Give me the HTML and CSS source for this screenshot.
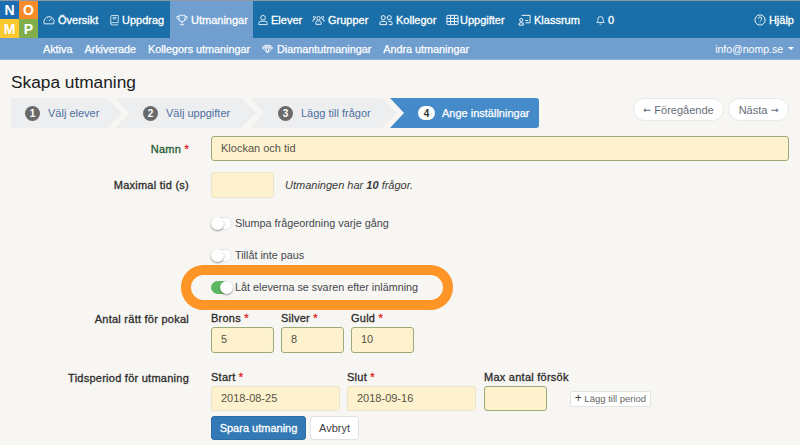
FILE: index.html
```html
<!DOCTYPE html>
<html lang="sv">
<head>
<meta charset="utf-8">
<title>Skapa utmaning</title>
<link rel="stylesheet" href="styles.css">
</head>
<body>
<header class="header">
  <div class="logo">
    <span class="logo-cell logo-n">N</span><span class="logo-cell logo-o">O</span>
    <span class="logo-cell logo-m">M</span><span class="logo-cell logo-p">P</span>
  </div>
  <nav class="topnav">
    <a class="topitem"><svg class="ico" viewBox="0 0 14 12"><path d="M1.500 10.500a6 6 0 1 1 11 0z"/><path d="M7 7l3-3M3.500 6.500h.5M10 7h.5M5 4h.5"/></svg>Översikt</a>
    <a class="topitem"><svg class="ico ico-9" viewBox="0 0 12 14"><path d="M1 11.500V2.500A1.500 1.500 0 0 1 2.500 1H11v9.500H2.500a1.500 1.500 0 0 0 0 3H11"/><path d="M3.500 3.500H8.500M3.500 5.500H8.500"/></svg>Uppdrag</a>
    <a class="topitem active"><svg class="ico" viewBox="0 0 14 13"><path d="M3.500 1h7v4a3.500 3.500 0 0 1-7 0zM3.500 2.500H1c0 2.500 1 3.500 3 4M10.500 2.500H13c0 2.500-1 3.500-3 4M7 8.500V11M4.500 12h5"/></svg>Utmaningar</a>
    <a class="topitem top-elever"><svg class="ico ico-10" viewBox="0 0 12 13"><circle cx="6" cy="3.800" r="2.800"/><path d="M1 12V10.500a2.500 2.500 0 0 1 2.500-2.500h5a2.500 2.500 0 0 1 2.500 2.500V12z"/></svg>Elever</a>
    <a class="topitem"><svg class="ico ico-13" viewBox="0 0 15 12"><circle cx="7.500" cy="4" r="2"/><circle cx="2.800" cy="3" r="1.300"/><circle cx="12.200" cy="3" r="1.300"/><path d="M4.500 11V9a2 2 0 0 1 2-2h2a2 2 0 0 1 2 2v2zM1 8V7a1.500 1.500 0 0 1 1.500-1.500h1M14 8V7a1.500 1.500 0 0 0-1.500-1.500h-1"/></svg>Grupper</a>
    <a class="topitem"><svg class="ico ico-14" viewBox="0 0 15 12"><circle cx="4.500" cy="3.500" r="2.200"/><circle cx="11" cy="3.500" r="2.200"/><path d="M1 11V9a1.500 1.500 0 0 1 1.500-1.500h4A1.500 1.500 0 0 1 8 9v2zM10 7.500h2.500A1.500 1.500 0 0 1 14 9v2h-3.500"/></svg>Kollegor</a>
    <a class="topitem top-tasks"><svg class="ico ico-13" viewBox="0 0 14 12"><rect x="1" y="1" width="12" height="10" rx="1"/><path d="M1 4.300h12M1 7.600h12M5 1v10M9 1v10"/></svg>Uppgifter</a>
    <a class="topitem"><svg class="ico ico-13" viewBox="0 0 14 12"><circle cx="3.500" cy="6" r="1.700"/><path d="M1 11.500V10.500A1.500 1.500 0 0 1 2.500 9h2A1.500 1.500 0 0 1 6 10.500v1zM4 1h9v8H8M8 6.500h3"/></svg>Klassrum</a>
    <a class="topitem bell"><svg class="ico ico-9" viewBox="0 0 11 13"><path d="M1 9.500c1-1 1.300-2 1.300-4a3.200 3.200 0 0 1 6.400 0c0 2 .3 3 1.300 4zM4.300 11.500h2.400"/></svg>0</a>
    <a class="topitem help"><svg class="ico" viewBox="0 0 13 13"><circle cx="6.500" cy="6.500" r="5.500"/><path d="M4.800 5a1.800 1.800 0 1 1 2.600 1.600c-.6.300-.9.700-.9 1.300M6.500 9.300v.7"/></svg>Hjälp</a>
  </nav>
</header>
<div class="subbar">
  <a class="subitem">Aktiva</a>
  <a class="subitem">Arkiverade</a>
  <a class="subitem">Kollegors utmaningar</a>
  <a class="subitem subitem-icon"><svg class="ico ico-gem" viewBox="0 0 12 10"><path d="M3 1h6l2.500 2.800L6 9.300.5 3.800zM.5 3.800h11M4 3.800L6 9.300l2-5.500M3 1l1 2.800L6 1l2 2.800L9 1"/></svg>Diamantutmaningar</a>
  <a class="subitem">Andra utmaningar</a>
  <a class="subitem account">info@nomp.se<span class="caret"></span></a>
</div>
<main class="page">
  <h1 class="title">Skapa utmaning</h1>
  <div class="wizard">
    <ol class="steps">
      <li class="step step-1"><span class="num">1</span>Välj elever</li>
      <li class="step step-2"><span class="num">2</span>Välj uppgifter</li>
      <li class="step step-3"><span class="num">3</span>Lägg till frågor</li>
      <li class="step step-4"><span class="num">4</span>Ange inställningar</li>
    </ol>
    <div class="pager">
      <a class="pill pill-prev"><span class="arrow">←</span>Föregående</a>
      <a class="pill pill-next">Nästa<span class="arrow">→</span></a>
    </div>
  </div>
  <form class="form">
    <div class="row row-name">
      <label class="lbl lbl-name">Namn <i class="req">*</i></label>
      <div class="field field-full"><span class="input strong full">Klockan och tid</span></div>
    </div>
    <div class="row row-time">
      <label class="lbl">Maximal tid (s)</label>
      <div class="field inline">
        <span class="input small"></span>
        <span class="hint">Utmaningen har <b>10</b> frågor.</span>
      </div>
    </div>
    <div class="row row-toggle">
      <div class="toggle-line"><span class="toggle"></span>Slumpa frågeordning varje gång</div>
    </div>
    <div class="row row-toggle">
      <div class="toggle-line"><span class="toggle"></span>Tillåt inte paus</div>
    </div>
    <div class="row row-toggle">
      <div class="toggle-line highlighted"><span class="toggle on"></span>Låt eleverna se svaren efter inlämning<span class="ring"></span></div>
    </div>
    <div class="row row-trophy">
      <label class="lbl lbl-top">Antal rätt för pokal</label>
      <div class="cols">
        <div class="col"><span class="sub">Brons <i class="req">*</i></span><span class="input strong small">5</span></div>
        <div class="col"><span class="sub">Silver <i class="req">*</i></span><span class="input strong small">8</span></div>
        <div class="col"><span class="sub">Guld <i class="req">*</i></span><span class="input strong small">10</span></div>
      </div>
    </div>
    <div class="row row-period">
      <label class="lbl lbl-top">Tidsperiod för utmaning</label>
      <div class="cols">
        <div class="col"><span class="sub">Start <i class="req">*</i></span><span class="input date">2018-08-25</span></div>
        <div class="col"><span class="sub">Slut <i class="req">*</i></span><span class="input date">2018-09-16</span></div>
        <div class="col col-max"><span class="sub">Max antal försök</span><span class="input strong small"></span></div>
        <a class="add"><span class="plus">+</span> Lägg till period</a>
      </div>
    </div>
    <div class="row row-actions">
      <div class="actions">
        <a class="btn primary">Spara utmaning</a>
        <a class="btn plain">Avbryt</a>
      </div>
    </div>
  </form>
</main>
</body>
</html>
```
FILE: styles.css
```css
* { box-sizing: border-box; }
html, body { margin: 0; padding: 0; }
body {
  width: 800px;
  height: 445px;
  overflow: hidden;
  background: #f7f6f2;
  color: #2b2b2b;
  font-family: "Liberation Sans", Arial, sans-serif;
  font-size: 11px;
}
a { text-decoration: none; color: inherit; }
.header {
  display: flex;
  height: 38px;
  border-top: 1px solid #8c9aa6;
  background: #1b6fa8;
}
.logo {
  display: grid;
  grid-template-columns: 19px 19px;
  grid-template-rows: 18px 19px;
  flex: none;
  width: 38px;
  margin-right: -1px;
  position: relative;
}
.logo-cell {
  display: flex;
  align-items: center;
  justify-content: center;
  color: #fff;
  font-weight: 700;
  font-size: 14px;
}
.logo-n { background: #1b6cb3; }
.logo-o { background: #f68b2c; }
.logo-m { background: #fdc92f; }
.logo-p { background: #7fae4b; }
.topnav {
  display: grid;
  flex: 1;
  grid-template-columns: 67px 66px 83px 53px 67px 67px 72px 72px auto 1fr;
}
.topitem {
  display: flex;
  align-items: center;
  gap: 3px;
  padding: 0 6px;
  color: #fff;
  font-size: 11px;
  white-space: nowrap;
  -webkit-text-stroke: .3px #fff;
}
.topitem.active { background: #6f9ecf; }
.ico {
  flex: none;
  width: 12px;
  height: 12px;
  fill: none;
  stroke: #fff;
  stroke-width: 1;
}
.ico-9 { width: 9px; }
.ico-10 { width: 10px; }
.ico-13 { width: 13px; }
.ico-14 { width: 14px; }
.top-elever { padding-left: 5px; }
.top-tasks .ico { margin-right: -2px; }
.bell { margin-left: 6px; }
.help { justify-self: end; }
.subbar {
  display: flex;
  align-items: center;
  height: 22px;
  padding-left: 37px;
  background: #6f9ecf;
  border-bottom: 1px solid #8fb2d8;
}
.subitem {
  display: flex;
  align-items: center;
  gap: 4px;
  padding: 0 6px;
  color: #fff;
  font-size: 10.800px;
  -webkit-text-stroke: .25px #fff;
}
.ico-gem { width: 11px; height: 10px; }
.account { margin-left: auto; -webkit-text-stroke: 0; font-size: 10.500px; }
.caret {
  width: 0;
  height: 0;
  margin-left: 1px;
  border-left: 3px solid transparent;
  border-right: 3px solid transparent;
  border-top: 3px solid #fff;
}
.page { padding: 0 11px; }
.title {
  margin: 0;
  height: 38px;
  padding-top: 12px;
  color: #1c1c1c;
  font-size: 17.300px;
  font-weight: 400;
  line-height: 21px;
}
.wizard { display: flex; justify-content: space-between; align-items: flex-start; }
.steps { display: flex; margin: 0; padding: 0; list-style: none; }
.step {
  display: flex;
  align-items: center;
  height: 30px;
  margin-left: -7px;
  background: #edeef0;
  color: #4f6f9f;
  font-size: 11px;
  clip-path: polygon(0 0, calc(100% - 15px) 0, 100% 50%, calc(100% - 15px) 100%, 0 100%, 14px 50%);
}
.step-1 {
  width: 111px;
  margin-left: 0;
  padding-left: 14px;
  border-radius: 3px 0 0 3px;
  clip-path: polygon(0 0, calc(100% - 15px) 0, 100% 50%, calc(100% - 15px) 100%, 0 100%);
}
.step-2 { width: 141px; padding-left: 28px; }
.step-3 { width: 147px; margin-left: -6px; padding-left: 28px; }
.step-4 {
  width: 149px;
  padding-left: 28px;
  background: #458ac9;
  color: #fff;
  -webkit-text-stroke: .25px #fff;
  border-radius: 0 3px 3px 0;
  clip-path: polygon(0 0, 100% 0, 100% 100%, 0 100%, 14px 50%);
}
.num {
  display: flex;
  align-items: center;
  justify-content: center;
  width: 15px;
  height: 15px;
  margin-right: 8px;
  border-radius: 8px;
  background: #6a6a6a;
  color: #fff;
  font-size: 10px;
  font-weight: 700;
  -webkit-text-stroke: 0;
}
.step-4 .num { width: 17px; height: 14px; margin-right: 7px; background: #fff; color: #333; }
.pager { display: flex; gap: 4px; }
.pill {
  display: flex;
  align-items: center;
  justify-content: center;
  gap: 3px;
  height: 23px;
  background: #fff;
  border: 1px solid #e8e8e8;
  border-radius: 12px;
  color: #666e78;
  font-size: 11px;
}
.pill-prev { width: 91px; }
.pill-next { width: 61px; }
.arrow { font-family: "DejaVu Sans", sans-serif; font-size: 9.500px; }
.form { margin-top: 8px; }
.row { display: grid; grid-template-columns: 178px 1fr; column-gap: 22px; align-items: center; }
.lbl {
  grid-column: 1;
  text-align: right;
  color: #2b2b2b;
  font-size: 11px;
  letter-spacing: .25px;
  -webkit-text-stroke: .3px currentColor;
}
.lbl-name { color: #1f5a34; }
.req { color: #e02020; font-style: normal; -webkit-text-stroke: .3px #e02020; }
.field { grid-column: 2; }
.inline { display: flex; align-items: center; gap: 11px; }
.input {
  display: block;
  height: 25px;
  padding: 0 9px;
  background: #fdf2cd;
  border: 1px solid #ebe4c8;
  border-radius: 3px;
  color: #55524a;
  font-size: 11px;
  line-height: 23px;
}
.strong { border-color: #9cab7a; }
.full { width: 578px; }
.small { width: 63px; }
.row-time { margin-top: 11px; height: 26px; }
.row-time .input { height: 26px; }
.hint { color: #3a3a3a; font-style: italic; font-size: 11px; }
.row-toggle { height: 32px; }
.row-time + .row-toggle { margin-top: 9px; }
.toggle-line {
  grid-column: 2;
  position: relative;
  display: flex;
  align-items: center;
  gap: 3px;
  color: #45474d;
  font-size: 10.800px;
}
.toggle {
  position: relative;
  display: block;
  width: 21px;
  height: 13px;
  background: #fff;
  border: 1px solid #e3e3e3;
  border-radius: 7px;
}
.toggle::after {
  content: "";
  position: absolute;
  left: -1px;
  top: -1px;
  width: 13px;
  height: 13px;
  background: #fff;
  border-radius: 50%;
  box-shadow: 0 1px 2px rgba(0, 0, 0, .4);
}
.toggle.on { background: #5cb860; border-color: #5cb860; }
.toggle.on::after { left: 8px; }
.ring {
  position: absolute;
  left: -30px;
  top: -16px;
  width: 272px;
  height: 45px;
  border: 10px solid #ff9427;
  border-radius: 23px;
}
.row-trophy { margin-top: 9px; align-items: start; }
.row-period { margin-top: 18px; align-items: start; }
.lbl-top { line-height: 14px; }
.cols { grid-column: 2; display: flex; gap: 7px; align-items: flex-start; }
.col { display: flex; flex-direction: column; }
.col-max { margin-left: 1px; }
.sub {
  height: 15px;
  line-height: 13px;
  font-size: 11px;
  letter-spacing: .25px;
  color: #2b2b2b;
  -webkit-text-stroke: .3px currentColor;
}
.row-trophy .input { height: 26px; }
.date { width: 129px; }
.add {
  margin: 20px 0 0 -6px;
  padding: 0 4px;
  height: 16px;
  line-height: 14px;
  background: #fff;
  border: 1px solid #e2e2e2;
  border-radius: 2px;
  color: #666;
  font-size: 9.500px;
  white-space: nowrap;
}
.plus { font-size: 12px; line-height: 12px; color: #444; }
.row-actions { margin-top: 5px; }
.actions { grid-column: 2; display: flex; gap: 4px; }
.btn {
  display: flex;
  align-items: center;
  justify-content: center;
  height: 24px;
  border-radius: 3px;
  font-size: 11px;
}
.primary {
  width: 95px;
  background: #3379b5;
  color: #fff;
  border: 1px solid #2e6da4;
  -webkit-text-stroke: .3px #fff;
}
.plain { width: 49px; background: #fff; border: 1px solid #e2e2e2; color: #444; }
```
